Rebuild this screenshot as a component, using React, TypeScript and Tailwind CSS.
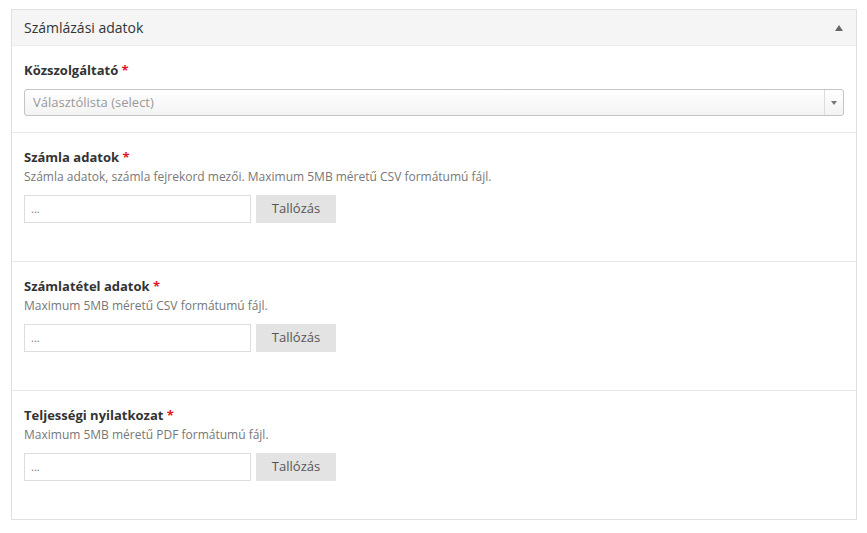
const font = { fontFamily: '"Open Sans", "Liberation Sans", sans-serif' }

interface FileFieldProps {
  label: string
  hint: string
}

function FileField({ label, hint }: FileFieldProps) {
  return (
    <div className="border-t border-[#e8e8e8] px-[12px] pt-[15px] pb-[38px]">
      <div className="text-[13px] leading-[18px] font-bold text-[#333]">
        {label} <span className="text-[#e3132a]">*</span>
      </div>
      <div className="text-[12px] leading-[17px] text-[#777] mt-[2px]">{hint}</div>
      <div className="flex items-center gap-[5px] mt-[10px]">
        <div className="w-[227px] h-[28px] border border-[#ddd] bg-white text-[11px] text-[#777] px-[6px] flex items-center">
          ...
        </div>
        <button className="w-[80px] h-[28px] bg-[#e3e3e3] text-[13px] text-[#555]">Tallózás</button>
      </div>
    </div>
  )
}

export default function App() {
  return (
    <div className="w-[867px] h-[533px] bg-white pt-[9px] pl-[11px]" style={font}>
      <div className="w-[846px] border border-[#e0e0e0]">
        <div className="h-[36px] bg-[#f5f5f5] border-b border-[#ececec] flex items-center justify-between pl-[12px] pr-[13px]">
          <span className="text-[14px] text-[#333]">Számlázási adatok</span>
          <svg width="8" height="6" viewBox="0 0 8 6">
            <path d="M4 0 L8 6 L0 6 Z" fill="#666" />
          </svg>
        </div>
        <div className="px-[12px] pt-[15px] pb-[16px]">
          <div className="text-[13px] leading-[18px] font-bold text-[#333]">
            Közszolgáltató <span className="text-[#e3132a]">*</span>
          </div>
          <div className="mt-[10px] h-[27px] border border-[#c4c4c4] rounded-[3px] bg-gradient-to-b from-white to-[#f3f3f3] flex items-stretch">
            <div className="flex-1 flex items-center px-[8px] text-[13px] text-[#999]">Választólista (select)</div>
            <div className="w-[19px] border-l border-[#dcdcdc] flex items-center justify-center">
              <svg width="6" height="4" viewBox="0 0 6 4">
                <path d="M0 0 L6 0 L3 4 Z" fill="#777" />
              </svg>
            </div>
          </div>
        </div>
        <FileField label="Számla adatok" hint="Számla adatok, számla fejrekord mezői. Maximum 5MB méretű CSV formátumú fájl." />
        <FileField label="Számlatétel adatok" hint="Maximum 5MB méretű CSV formátumú fájl." />
        <FileField label="Teljességi nyilatkozat" hint="Maximum 5MB méretű PDF formátumú fájl." />
      </div>
    </div>
  )
}
